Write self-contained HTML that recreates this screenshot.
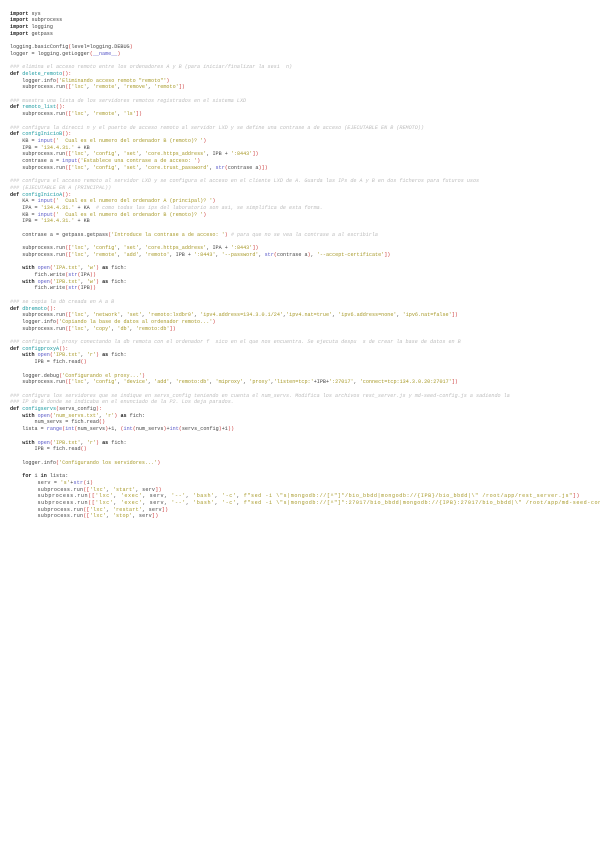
<!DOCTYPE html>
<html><head><meta charset="utf-8">
<style>
html,body{margin:0;padding:0;background:#fff;width:600px;height:848px;overflow:hidden}
pre{margin:0;position:absolute;left:10px;top:10.6px;font-family:"Liberation Mono",monospace;font-size:5.12px;line-height:6.7px;color:#444;white-space:pre}
.k{font-weight:bold;color:#222}
.f{color:#1a9aa0}
.s{color:#a89a2a}
.c{color:#bdbdbd;font-style:italic}
.b{color:#5a5ac8}
.p{color:#cc3b3b}
.w1{letter-spacing:0.2px;padding-left:3px}
.w2{letter-spacing:0.55px;padding-left:3px}
</style></head><body>
<pre><span class="k">import</span> sys
<span class="k">import</span> subprocess
<span class="k">import</span> logging
<span class="k">import</span> getpass

logging.basicConfig<span class="p">(</span>level=logging.DEBUG<span class="p">)</span>
logger = logging.getLogger<span class="p">(</span><span class="b">__name__</span><span class="p">)</span>

<span class="c">### elimina el acceso remoto entre los ordenadores A y B (para iniciar/finalizar la sesi  n)</span>
<span class="k">def</span> <span class="f">delete_remoto</span><span class="p">():</span>
    logger.info<span class="p">(</span><span class="s">'Eliminando acceso remoto "remoto"'</span><span class="p">)</span>
    subprocess.run<span class="p">([</span><span class="s">'lxc'</span>, <span class="s">'remote'</span>, <span class="s">'remove'</span>, <span class="s">'remoto'</span><span class="p">])</span>

<span class="c">### muestra una lista de los servidores remotos registrados en el sistema LXD</span>
<span class="k">def</span> <span class="f">remoto_list</span><span class="p">():</span>
    subprocess.run<span class="p">([</span><span class="s">'lxc'</span>, <span class="s">'remote'</span>, <span class="s">'ls'</span><span class="p">])</span>

<span class="c">### configura la direcci n y el puerto de acceso remoto al servidor LXD y se define una contrase a de acceso (EJECUTABLE EN B (REMOTO))</span>
<span class="k">def</span> <span class="f">configInicioB</span><span class="p">():</span>
    KB = <span class="b">input</span><span class="p">(</span><span class="s">'  Cual es el numero del ordenador B (remoto)? '</span><span class="p">)</span>
    IPB = <span class="s">'134.4.31.'</span> + KB
    subprocess.run<span class="p">([</span><span class="s">'lxc'</span>, <span class="s">'config'</span>, <span class="s">'set'</span>, <span class="s">'core.https_address'</span>, IPB + <span class="s">':8443'</span><span class="p">])</span>
    contrase a = <span class="b">input</span><span class="p">(</span><span class="s">'Establece una contrase a de acceso: '</span><span class="p">)</span>
    subprocess.run<span class="p">([</span><span class="s">'lxc'</span>, <span class="s">'config'</span>, <span class="s">'set'</span>, <span class="s">'core.trust_password'</span>, <span class="b">str</span><span class="p">(</span>contrase a<span class="p">)])</span>

<span class="c">### configura el acceso remoto al servidor LXD y se configura el acceso en el cliente LXD de A. Guarda las IPs de A y B en dos ficheros para futuros usos</span>
<span class="c">### (EJECUTABLE EN A (PRINCIPAL))</span>
<span class="k">def</span> <span class="f">configInicioA</span><span class="p">():</span>
    KA = <span class="b">input</span><span class="p">(</span><span class="s">'  Cual es el numero del ordenador A (principal)? '</span><span class="p">)</span>
    IPA = <span class="s">'134.4.31.'</span> + KA  <span class="c"># como todas las ips del laboratorio son asi, se simplifica de esta forma.</span>
    KB = <span class="b">input</span><span class="p">(</span><span class="s">'  Cual es el numero del ordenador B (remoto)? '</span><span class="p">)</span>
    IPB = <span class="s">'134.4.31.'</span> + KB

    contrase a = getpass.getpass<span class="p">(</span><span class="s">'Introduce la contrase a de acceso: '</span><span class="p">)</span> <span class="c"># para que no se vea la contrase a al escribirla</span>

    subprocess.run<span class="p">([</span><span class="s">'lxc'</span>, <span class="s">'config'</span>, <span class="s">'set'</span>, <span class="s">'core.https_address'</span>, IPA + <span class="s">':8443'</span><span class="p">])</span>
    subprocess.run<span class="p">([</span><span class="s">'lxc'</span>, <span class="s">'remote'</span>, <span class="s">'add'</span>, <span class="s">'remoto'</span>, IPB + <span class="s">':8443'</span>, <span class="s">'--password'</span>, <span class="b">str</span><span class="p">(</span>contrase a<span class="p">)</span>, <span class="s">'--accept-certificate'</span><span class="p">])</span>

    <span class="k">with</span> <span class="b">open</span><span class="p">(</span><span class="s">'IPA.txt'</span>, <span class="s">'w'</span><span class="p">)</span> <span class="k">as</span> fich:
        fich.write<span class="p">(</span><span class="b">str</span><span class="p">(</span>IPA<span class="p">))</span>
    <span class="k">with</span> <span class="b">open</span><span class="p">(</span><span class="s">'IPB.txt'</span>, <span class="s">'w'</span><span class="p">)</span> <span class="k">as</span> fich:
        fich.write<span class="p">(</span><span class="b">str</span><span class="p">(</span>IPB<span class="p">))</span>

<span class="c">### se copia la db creada en A a B</span>
<span class="k">def</span> <span class="f">dbremoto</span><span class="p">():</span>
    subprocess.run<span class="p">([</span><span class="s">'lxc'</span>, <span class="s">'network'</span>, <span class="s">'set'</span>, <span class="s">'remoto:lxdbr0'</span>, <span class="s">'ipv4.address=134.3.0.1/24'</span>,<span class="s">'ipv4.nat=true'</span>, <span class="s">'ipv6.address=none'</span>, <span class="s">'ipv6.nat=false'</span><span class="p">])</span>
    logger.info<span class="p">(</span><span class="s">'Copiando la base de datos al ordenador remoto...'</span><span class="p">)</span>
    subprocess.run<span class="p">([</span><span class="s">'lxc'</span>, <span class="s">'copy'</span>, <span class="s">'db'</span>, <span class="s">'remoto:db'</span><span class="p">])</span>

<span class="c">### configura el proxy conectando la db remota con el ordenador f  sico en el que nos encuentra. Se ejecuta despu  s de crear la base de datos en B</span>
<span class="k">def</span> <span class="f">configproxyA</span><span class="p">():</span>
    <span class="k">with</span> <span class="b">open</span><span class="p">(</span><span class="s">'IPB.txt'</span>, <span class="s">'r'</span><span class="p">)</span> <span class="k">as</span> fich:
        IPB = fich.read<span class="p">()</span>

    logger.debug<span class="p">(</span><span class="s">'Configurando el proxy...'</span><span class="p">)</span>
    subprocess.run<span class="p">([</span><span class="s">'lxc'</span>, <span class="s">'config'</span>, <span class="s">'device'</span>, <span class="s">'add'</span>, <span class="s">'remoto:db'</span>, <span class="s">'miproxy'</span>, <span class="s">'proxy'</span>,<span class="s">'listen=tcp:'</span>+IPB+<span class="s">':27017'</span>, <span class="s">'connect=tcp:134.3.0.20:27017'</span><span class="p">])</span>

<span class="c">### configura los servidores que se indique en servs_config teniendo en cuenta el num_servs. Modifica los archivos rest_server.js y md-seed-config.js a sadiendo la</span>
<span class="c">### IP de B donde se indicaba en el enunciado de la P2. Los deja parados.</span>
<span class="k">def</span> <span class="f">configservs</span><span class="p">(</span>servs_config<span class="p">):</span>
    <span class="k">with</span> <span class="b">open</span><span class="p">(</span><span class="s">'num_servs.txt'</span>, <span class="s">'r'</span><span class="p">)</span> <span class="k">as</span> fich:
        num_servs = fich.read<span class="p">()</span>
    lista = <span class="b">range</span><span class="p">(</span><span class="b">int</span><span class="p">(</span>num_servs<span class="p">)</span>+1, <span class="p">(</span><span class="b">int</span><span class="p">(</span>num_servs<span class="p">)</span>+<span class="b">int</span><span class="p">(</span>servs_config<span class="p">)</span>+1<span class="p">))</span>

    <span class="k">with</span> <span class="b">open</span><span class="p">(</span><span class="s">'IPB.txt'</span>, <span class="s">'r'</span><span class="p">)</span> <span class="k">as</span> fich:
        IPB = fich.read<span class="p">()</span>

    logger.info<span class="p">(</span><span class="s">'Configurando los servidores...'</span><span class="p">)</span>

    <span class="k">for</span> i <span class="k">in</span> lista:
        <span class="w1">serv = <span class="s">'s'</span>+<span class="b">str</span><span class="p">(</span>i<span class="p">)</span></span>
        <span class="w1">subprocess.run<span class="p">([</span><span class="s">'lxc'</span>, <span class="s">'start'</span>, serv<span class="p">])</span></span>
        <span class="w2">subprocess.run<span class="p">([</span><span class="s">'lxc'</span>, <span class="s">'exec'</span>, serv, <span class="s">'--'</span>, <span class="s">'bash'</span>, <span class="s">'-c'</span>, <span class="s">f"sed -i \"s|mongodb://[^"]*/bio_bbdd|mongodb://{IPB}/bio_bbdd|\" /root/app/rest_server.js"</span><span class="p">])</span></span>
        <span class="w2">subprocess.run<span class="p">([</span><span class="s">'lxc'</span>, <span class="s">'exec'</span>, serv, <span class="s">'--'</span>, <span class="s">'bash'</span>, <span class="s">'-c'</span>, <span class="s">f"sed -i \"s|mongodb://[^"]*:27017/bio_bbdd|mongodb://{IPB}:27017/bio_bbdd|\" /root/app/md-seed-config.js"</span><span class="p">])</span></span>
        <span class="w1">subprocess.run<span class="p">([</span><span class="s">'lxc'</span>, <span class="s">'restart'</span>, serv<span class="p">])</span></span>
        <span class="w1">subprocess.run<span class="p">([</span><span class="s">'lxc'</span>, <span class="s">'stop'</span>, serv<span class="p">])</span></span>
</pre>
</body></html>
